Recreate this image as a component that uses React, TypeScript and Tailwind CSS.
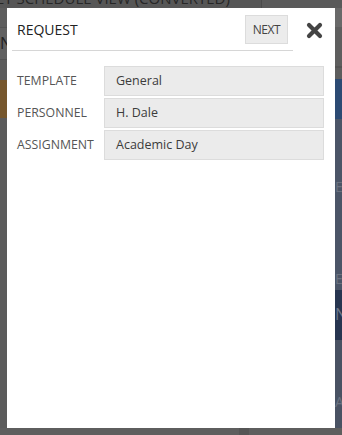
import React from "react";

const rows = [
  { label: "TEMPLATE", value: "General" },
  { label: "PERSONNEL", value: "H. Dale" },
  { label: "ASSIGNMENT", value: "Academic Day" },
];

function CloseIcon() {
  return (
    <svg width="17" height="17" viewBox="0 0 17 17" className="block">
      <path
        d="M3 3 L14 14 M14 3 L3 14"
        stroke="#444444"
        strokeWidth="4.2"
        strokeLinecap="round"
        fill="none"
      />
    </svg>
  );
}

export default function App() {
  return (
    <div
      className="relative w-[342px] h-[435px] overflow-hidden bg-[#5c5c5c]"
      style={{ fontFamily: '"Open Sans", "Liberation Sans", sans-serif' }}
    >
      {/* dimmed page behind the dialog */}
      <div className="flex h-[8px] overflow-hidden bg-[#565656]">
        <div className="w-[261px] overflow-hidden">
          <div className="-mt-[12px] -ml-[4px] whitespace-nowrap text-[15px] leading-[20px] text-[#262626]">
            ET SCHEDULE VIEW (CONVERTED)
          </div>
        </div>
        <div className="w-px bg-[#4a4a4a]" />
        <div className="flex-1 bg-[#5a5a5a]" />
      </div>

      <div className="flex h-[420px]">
        <div className="flex w-[7px] flex-col">
          <div className="h-[19px] bg-[#5d5d5d]" />
          <div className="h-px bg-[#535353]" />
          <div className="h-[31px] overflow-hidden bg-[#606060] pt-[5px] text-[16px] leading-[20px] text-[#222]">
            N'
          </div>
          <div className="h-px bg-[#525252]" />
          <div className="h-[20px] bg-[#5c5c5c]" />
          <div className="h-[38px] bg-[#76572d]" />
          <div className="flex-1 bg-[#5b5b5b]" />
        </div>
        <div className="flex-1" />
        <div className="flex w-[7px] flex-col">
          <div className="h-[19px] bg-[#696969]" />
          <div className="h-[39px] bg-[#5e5e5e]" />
          <div className="h-[2px] bg-[#545454]" />
          <div className="h-[11px] bg-[#5d5d5d]" />
          <div className="h-[40px] bg-[#2c4a73]" />
          <div className="h-[171px] overflow-hidden bg-[#4b5567] pt-[58px] text-[14px] leading-[20px] text-[#6b7280]">
            E
            <div className="pt-[72px]">E</div>
          </div>
          <div className="h-[50px] overflow-hidden bg-[#273550] pt-[14px] text-[16px] leading-[20px] text-[#6b7588]">
            N
          </div>
          <div className="flex-1 overflow-hidden bg-[#495263] pt-[52px] text-[14px] leading-[20px] text-[#6b7280]">
            AR
          </div>
        </div>
      </div>

      <div className="flex h-[7px]">
        <div className="w-[239px] bg-[#5e5e5e]" />
        <div className="w-[10px] bg-[#555555]" />
        <div className="flex-1 bg-[#5e5e5e]" />
      </div>

      {/* dialog */}
      <div className="absolute left-[7px] top-[8px] flex h-[420px] w-[328px] flex-col bg-white">
        <div className="flex items-start">
          <div className="ml-[5px] flex w-[281px] items-center justify-between border-b border-[#d6d6d6] px-[5px] pt-[7px] pb-[6px]">
            <div className="text-[14px] leading-[20px] text-[#222]">REQUEST</div>
            <button className="flex h-[29px] w-[43px] items-center justify-center border border-[#dcdcdc] bg-[#ececec] text-[12px] tracking-[-0.4px] text-[#444]">
              NEXT
            </button>
          </div>
          <div className="ml-[13px] mt-[14px]">
            <CloseIcon />
          </div>
        </div>

        <div className="mt-[15px] flex flex-col gap-[2px] pl-[10px] pr-[11px]">
          {rows.map((r) => (
            <div key={r.label} className="flex items-center">
              <div className="w-[87px] text-[12.3px] leading-[16px] text-[#555]">
                {r.label}
              </div>
              <div className="flex h-[30px] flex-1 items-center border border-[#dcdcdc] bg-[#ebebeb] pl-[11px] text-[12.5px] text-[#3c3c3c]">
                {r.value}
              </div>
            </div>
          ))}
        </div>
      </div>
    </div>
  );
}
